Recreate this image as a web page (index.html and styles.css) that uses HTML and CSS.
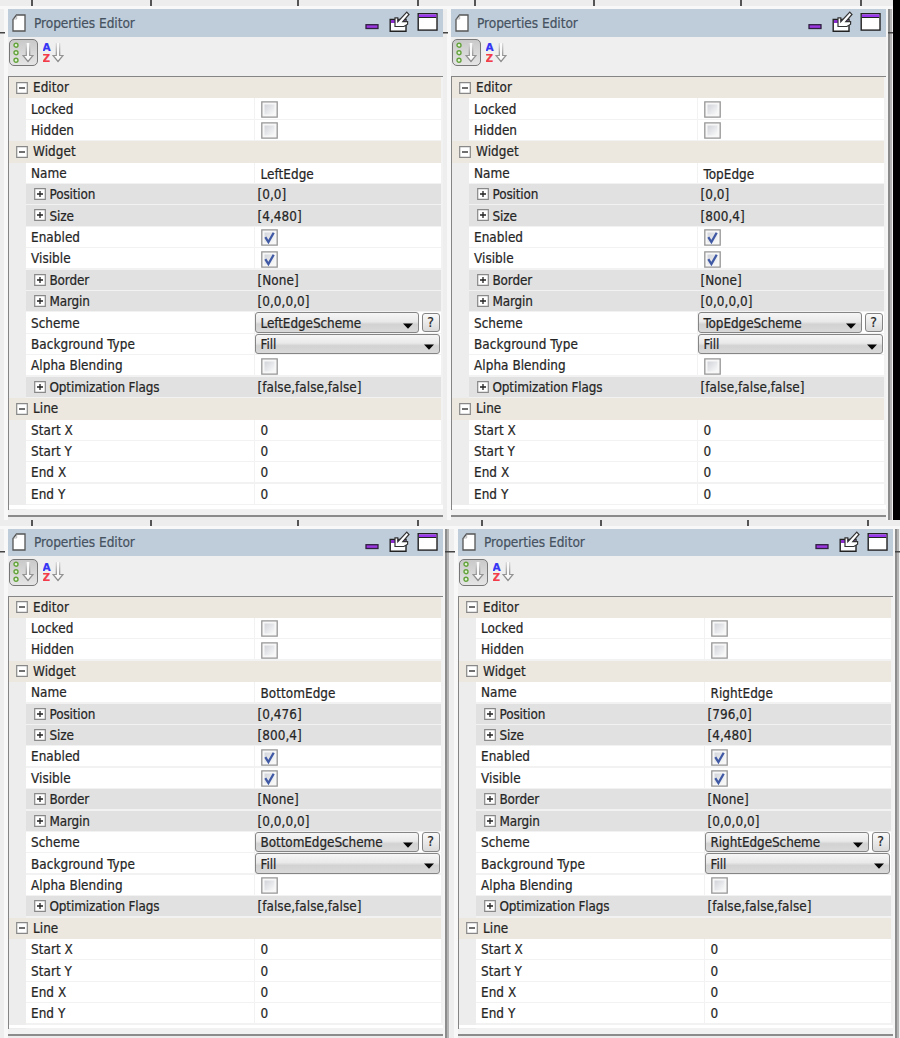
FILE: index.html
```html
<!DOCTYPE html>
<html lang="en">
<head>
<meta charset="utf-8">
<title>Properties Editor</title>
<link rel="stylesheet" href="styles.css">
</head>
<body>
<svg class="defs" aria-hidden="true">
  <defs>
    <linearGradient id="arrow-fade" x1="0" y1="0" x2="0" y2="1"><stop offset="0" stop-color="#ddd"/><stop offset=".55" stop-color="#999"/><stop offset="1" stop-color="#888"/></linearGradient>
    <linearGradient id="box-shade" x1="0" y1="0" x2="1" y2="1"><stop offset="0" stop-color="#d0d3d9"/><stop offset="1" stop-color="#fafafa"/></linearGradient>
    <symbol id="doc" viewBox="0 0 14 18"><path d="M4.5 1H13v16H1V5.5Z" fill="#fff" stroke="#555" stroke-width="1.3"/><path d="M4.7 1.5V5H1.5" fill="none" stroke="#aaa" stroke-width=".8"/></symbol>
    <symbol id="window-icons" viewBox="0 0 74 22">
      <rect x="1" y="13.7" width="12" height="3.8" fill="#9a35df" stroke="#302040" stroke-width="1.3"/>
      <path d="M25.2 8.4H41v11.8H25.2Z" fill="#fff" stroke="#222" stroke-width="1.4"/>
      <path d="M26 9h14v3H26Z" fill="#8b2ccc"/>
      <path d="M41.8 1.2 44 3.5l-6.2 7.2h4.8v2.5l-3.7 2.3H30V6.8h2.8v3.9Z" fill="#fff" stroke="#333" stroke-width="1.2"/>
      <rect x="53.2" y="2.7" width="18.8" height="16.4" fill="#fff" stroke="#222" stroke-width="1.4"/>
      <path d="M53.9 3.4h17.4v2.8H53.9Z" fill="#9a35ee"/><path d="M53.9 6.5h17.4" stroke="#222" stroke-width="1"/>
    </symbol>
    <symbol id="down" viewBox="0 0 12 20"><path d="M4.3 0v12.5H1L6 18.5l5-6H7.7V0" fill="#fafafa" stroke="url(#arrow-fade)" stroke-width="1.2"/></symbol>
    <symbol id="dots" viewBox="0 0 6 22"><g fill="#e5f4dc" stroke="#64a33c" stroke-width="1.4"><circle cx="3" cy="3.2" r="2"/><circle cx="3" cy="10.7" r="2"/><circle cx="3" cy="18.3" r="2"/></g></symbol>
    <symbol id="minus" viewBox="0 0 12 12"><path d="M.7.7h10.6v10.6H.7Z" fill="#fff" stroke="#888" stroke-width="1.2"/><path d="M3 6h6" stroke="#222" stroke-width="1.3"/></symbol>
    <symbol id="plus" viewBox="0 0 12 12"><path d="M.7.7h10.6v10.6H.7Z" fill="#fff" stroke="#888" stroke-width="1.2"/><path d="M3 6h6M6 3v6" stroke="#222" stroke-width="1.3"/></symbol>
    <symbol id="off" viewBox="0 0 17 17"><path d="M.8.8h15.4v15.4H.8Z" fill="#f7f7f7" stroke="#969696" stroke-width="1.3"/><path d="M3.5 3.5h10v10h-10Z" fill="url(#box-shade)"/></symbol>
    <symbol id="on" viewBox="0 0 17 17"><use href="#off"/><path d="M4.3 8.2 7.4 13 12.7 3.7" fill="none" stroke="#4059a5" stroke-width="2.3"/></symbol>
    <symbol id="caret" viewBox="0 0 10 6"><path d="M0 .5h10L5 5.7Z" fill="#050505"/></symbol>
  </defs>
</svg>
<main class="sheet" id="sheet"></main>
<script src="panels.js"></script>
</body>
</html>
```
FILE: panels.js
```js
const panels = [
  { cls: "top plain", name: "LeftEdge", pos: "[0,0]", size: "[4,480]" },
  { cls: "top edged", name: "TopEdge", pos: "[0,0]", size: "[800,4]" },
  { cls: "bottom edged", name: "BottomEdge", pos: "[0,476]", size: "[800,4]" },
  { cls: "bottom edged", name: "RightEdge", pos: "[796,0]", size: "[4,480]" }
];

const icon = (id, cls) => `<svg class="${cls || id}"><use href="#${id}"/></svg>`;
const group = (t) => `<div class="row group">${icon("minus", "toggle")}<span>${t}</span></div>`;
const row = (t, v, cls = "") => `<div class="row item"><div class="label"><span>${t}</span></div><div class="value ${cls}">${v}</div></div>`;
const nest = (t, v) => `<div class="row item nested"><div class="label">${icon("plus", "toggle")}<span>${t}</span></div><div class="value"><span>${v}</span></div></div>`;
const select = (t) => `<div class="select"><span>${t}</span>${icon("caret")}</div>`;
const check = (on) => icon(on ? "on" : "off", "check");

const panel = (p) => `
<section class="panel ${p.cls}">
  <div class="ruler"><i></i><i></i><i></i><i></i></div>
  <div class="mid">
    <div class="side"></div>
    <div class="body">
      <header class="title">${icon("doc")}<h1>Properties Editor</h1>${icon("window-icons")}</header>
      <div class="tools"><div class="tool pressed">${icon("dots")}${icon("down")}</div><div class="tool"><div class="az"><b>A</b><b>Z</b></div>${icon("down")}</div></div>
      <div class="grid">
        ${group("Editor")}${row("Locked", check(false), "ctl")}${row("Hidden", check(false), "ctl")}
        ${group("Widget")}${row("Name", `<span>${p.name}</span>`, "text")}
        ${nest("Position", p.pos)}${nest("Size", p.size)}
        ${row("Enabled", check(true), "ctl")}${row("Visible", check(true), "ctl")}
        ${nest("Border", "[None]")}${nest("Margin", "[0,0,0,0]")}
        ${row("Scheme", select(p.name + "Scheme") + '<div class="help">?</div>', "pick")}
        ${row("Background Type", select("Fill"), "pick")}
        ${row("Alpha Blending", check(false), "ctl")}
        ${nest("Optimization Flags", "[false,false,false]")}
        ${group("Line")}${["Start X", "Start Y", "End X", "End Y"].map((t) => row(t, "<span>0</span>", "num")).join("")}
        <div class="blank"></div>
      </div>
      <div class="foot"></div>
    </div>
    <div class="edge"></div>
  </div>
</section>`;

const [a, b, c, d] = panels.map(panel);
document.getElementById("sheet").innerHTML =
  `<div class="pair first">${a}${b}<div class="void"></div></div><div class="pair">${c}${d}</div>`;
```
FILE: styles.css
```css
* { box-sizing: border-box; }
body { margin: 0; background: #f3f3f3; font: 13.4px "DejaVu Sans Condensed", "DejaVu Sans", sans-serif; font-stretch: condensed; letter-spacing: 0.05px; color: #252525; -webkit-text-stroke: 0.2px; }
.defs { position: absolute; width: 0; height: 0; }
svg { display: block; flex: none; }
.sheet { width: 900px; height: 1038px; overflow: hidden; }
.pair { display: flex; height: 519px; }
.first { height: 519.5px; }
.void { width: 7px; background: #000; }
.panel { width: 450px; height: 519.5px; display: flex; flex-direction: column; overflow: hidden; }
.panel.plain { width: 443px; }
.ruler { height: 9px; flex: none; display: flex; padding-left: 31px; background: linear-gradient(#ededed 0 6px, #f8f8f8 6px); }
.ruler i { width: 1.5px; height: 6px; flex: none; background: #555; margin-right: 117.5px; }
.ruler i:nth-child(2) { margin-right: 145.5px; }
.ruler i:nth-child(3) { margin-right: 118.5px; }
.ruler i:nth-child(4) { margin-right: 0; }
.mid { display: flex; flex: 1; min-height: 0; }
.side { width: 8px; flex: none; background: linear-gradient(#444, #444) 0 22.5px / 5px 1.5px no-repeat, linear-gradient(90deg, #eee 0 4px, #f8f8f8 4px); }
.body { width: 435px; flex: none; }
.edge { flex: 1; background: linear-gradient(#444, #444) 2px 22.5px / 5px 1.5px no-repeat, linear-gradient(90deg, #f5f5f5 0 1.5px, #8c8c8c 1.5px 4px, #b5b5b5 4px 5.5px, #efefef 5.5px); }
.title { height: 27.5px; display: flex; align-items: center; padding-left: 4px; background: #bfcddb; }
.doc { width: 14px; height: 18px; }
.title h1 { margin: 0 0 0 8px; font: inherit; font-size: 13.6px; letter-spacing: -0.06px; color: #46525f; width: 330.5px; }
.window-icons { width: 74px; height: 22px; margin-top: -1px; }
.tools { height: 39.5px; background: #efefef; padding: 2.5px 1px; display: flex; }
.tool { display: flex; align-items: center; height: 27px; width: 29px; padding-left: 4px; gap: 6px; }
.pressed { border: 1.5px solid #777; border-radius: 5px; background: linear-gradient(#c9c9c9, #e5e5e5); padding-left: 3px; gap: 3px; }
.dots { width: 6px; height: 22px; }
.down { width: 12px; height: 20px; }
.az { width: 9px; display: flex; flex-direction: column; font: bold 10.5px/10.5px "DejaVu Sans", sans-serif; letter-spacing: 0; color: #3434f5; }
.az b { display: block; height: 10.5px; overflow: hidden; }
.az b + b { color: #f23d48; }
.tool:not(.pressed) { gap: 0; padding-left: 4.5px; }
.grid { border: solid #858585; border-width: 1.5px 0 0 1.5px; background: linear-gradient(90deg, #ededed 17px, #f2f2f2 17px); height: 433.5px; }
.row { height: 21.42px; display: flex; align-items: center; margin-right: 2px; }
.blank { height: 3.6px; background: #fff; }
.group { background: #ece8e0; padding-left: 7px; gap: 5px; }
.toggle { width: 12px; height: 12px; }
.item { padding: 0 0 1.3px 17px; }
.item span { position: relative; top: 0.6px; }
.label { width: 227.5px; height: 100%; background: #fff; display: flex; align-items: center; gap: 4px; padding-left: 5px; margin-right: 1px; }
.value { flex: 1; height: 100%; background: #fff; display: flex; align-items: center; padding-left: 3px; min-width: 0; }
.nested .label, .nested .value { background: #e1e1e1; }
.nested .label { padding-left: 7.5px; width: 228.5px; margin: 0; letter-spacing: -0.14px; }
.text, .num { padding-left: 6px; }
.text span { margin-top: 1.5px; }
.ctl { padding-left: 6px; }
.check { width: 17px; height: 17px; margin-top: 1.4px; }
.pick { padding: 0 1.5px 0 0; gap: 3px; letter-spacing: -0.06px; }
.select { flex: 1; height: 20.4px; border: 1.4px solid #858585; border-radius: 3px; background: linear-gradient(#f6f6f6, #e9e9e9 45%, #d2d2d2 60%, #d9d9d9); display: flex; align-items: center; justify-content: space-between; padding: 0 5px; }
.caret { width: 10px; height: 6px; margin-top: 6px; }
.help { width: 18px; height: 19.5px; border: 1.4px solid #858585; border-radius: 3px; background: linear-gradient(#fafafa, #d9d9d9); text-align: center; line-height: 17.5px; font-size: 14px; }
.foot { height: 14px; background: linear-gradient(#f1f1f1 0 5.5px, #8b8b8b 5.5px 7.5px, #ececec 7.5px); }
```
